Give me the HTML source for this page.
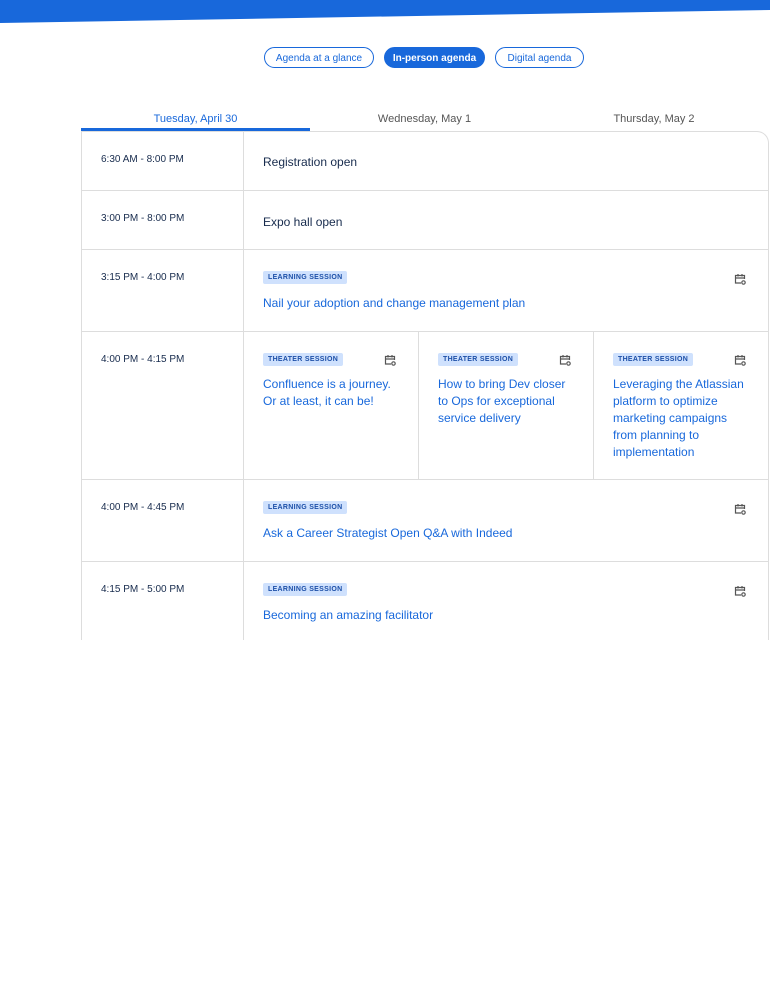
<!DOCTYPE html>
<html><head><meta charset="utf-8"><style>
*{box-sizing:border-box;margin:0;padding:0}
body{width:770px;height:999px;background:#fff;font-family:"Liberation Sans",sans-serif;position:relative;overflow:hidden}
.btn{position:absolute;top:47px;height:21px;border:1px solid #1868db;border-radius:11px;font-size:10px;color:#1868db;text-align:center;line-height:21px}
.tab{position:absolute;top:113px;font-size:11px;color:#555;text-align:center}
.card{position:absolute;left:81px;top:131px;width:688px;height:509px;border:1px solid #ddd;border-bottom:none;border-top-right-radius:12px;overflow:hidden}
.row{position:absolute;left:0;right:0;border-bottom:1px solid #ddd}
.time{position:absolute;left:19px;top:22px;font-size:10px;color:#172b4d}
.vl{position:absolute;top:0;bottom:0;width:1px;background:#ddd}
.plain{position:absolute;left:181px;font-size:12px;color:#172b4d}
.tag{position:absolute;background:#cfe1fd;color:#1c4fa8;font-size:7px;font-weight:bold;padding:3px 5px;border-radius:2px;letter-spacing:.3px}
.ttl{position:absolute;font-size:12px;color:#1868db;line-height:17px}
.ic{position:absolute;width:12px;height:12px}
</style></head><body>
<svg style="position:absolute;left:0;top:0" width="770" height="25"><polygon points="0,0 770,0 770,10 0,23" fill="#1868db"/></svg>
<div class="btn" style="left:264px;width:110px">Agenda at a glance</div>
<div class="btn" style="left:384px;width:101px;background:#1868db;color:#fff;font-weight:bold">In-person agenda</div>
<div class="btn" style="left:495px;width:89px">Digital agenda</div>
<div class="tab" style="left:81px;width:229px;color:#1868db">Tuesday, April 30</div>
<div class="tab" style="left:310px;width:229px">Wednesday, May 1</div>
<div class="tab" style="left:539px;width:230px">Thursday, May 2</div>
<div style="position:absolute;left:81px;top:128px;width:229px;height:3px;background:#1868db"></div>
<div class="card">
<div class="vl" style="left:161px"></div>
<div class="row" style="top:0;height:59px"><div class="time">6:30 AM - 8:00 PM</div><div class="plain" style="top:23px">Registration open</div></div>
<div class="row" style="top:59px;height:59px"><div class="time">3:00 PM - 8:00 PM</div><div class="plain" style="top:24px">Expo hall open</div></div>
<div class="row" style="top:118px;height:82px"><div class="time">3:15 PM - 4:00 PM</div><div class="tag" style="left:181px;top:21px">LEARNING SESSION</div><div class="ttl" style="left:181px;top:45px">Nail your adoption and change management plan</div>
<svg class="ic" style="left:652px;top:23px" viewBox="0 0 12 12" fill="none" stroke="#555" stroke-width="1.2"><path d="M7 10H1.5V2.5h9V6M1.5 5h9M4 1v2.5M8 1v2.5"/><circle cx="9.5" cy="9.5" r="1.7"/></svg></div>
<div class="row" style="top:200px;height:148px"><div class="time">4:00 PM - 4:15 PM</div>
<div class="vl" style="left:336px"></div><div class="vl" style="left:511px"></div>
<div class="tag" style="left:181px;top:21px">THEATER SESSION</div><div class="ttl" style="left:181px;top:44px">Confluence is a journey.<br>Or at least, it can be!</div>
<div class="tag" style="left:356px;top:21px">THEATER SESSION</div><div class="ttl" style="left:356px;top:44px">How to bring Dev closer<br>to Ops for exceptional<br>service delivery</div>
<div class="tag" style="left:531px;top:21px">THEATER SESSION</div><div class="ttl" style="left:531px;top:44px">Leveraging the Atlassian<br>platform to optimize<br>marketing campaigns<br>from planning to<br>implementation</div>
<svg class="ic" style="left:302px;top:22px" viewBox="0 0 12 12" fill="none" stroke="#555" stroke-width="1.2"><path d="M7 10H1.5V2.5h9V6M1.5 5h9M4 1v2.5M8 1v2.5"/><circle cx="9.5" cy="9.5" r="1.7"/></svg>
<svg class="ic" style="left:477px;top:22px" viewBox="0 0 12 12" fill="none" stroke="#555" stroke-width="1.2"><path d="M7 10H1.5V2.5h9V6M1.5 5h9M4 1v2.5M8 1v2.5"/><circle cx="9.5" cy="9.5" r="1.7"/></svg>
<svg class="ic" style="left:652px;top:22px" viewBox="0 0 12 12" fill="none" stroke="#555" stroke-width="1.2"><path d="M7 10H1.5V2.5h9V6M1.5 5h9M4 1v2.5M8 1v2.5"/><circle cx="9.5" cy="9.5" r="1.7"/></svg></div>
<div class="row" style="top:348px;height:82px"><div class="time">4:00 PM - 4:45 PM</div><div class="tag" style="left:181px;top:21px">LEARNING SESSION</div><div class="ttl" style="left:181px;top:45px">Ask a Career Strategist Open Q&amp;A with Indeed</div>
<svg class="ic" style="left:652px;top:23px" viewBox="0 0 12 12" fill="none" stroke="#555" stroke-width="1.2"><path d="M7 10H1.5V2.5h9V6M1.5 5h9M4 1v2.5M8 1v2.5"/><circle cx="9.5" cy="9.5" r="1.7"/></svg></div>
<div class="row" style="top:430px;height:90px;border-bottom:none"><div class="time">4:15 PM - 5:00 PM</div><div class="tag" style="left:181px;top:21px">LEARNING SESSION</div><div class="ttl" style="left:181px;top:45px">Becoming an amazing facilitator</div>
<svg class="ic" style="left:652px;top:23px" viewBox="0 0 12 12" fill="none" stroke="#555" stroke-width="1.2"><path d="M7 10H1.5V2.5h9V6M1.5 5h9M4 1v2.5M8 1v2.5"/><circle cx="9.5" cy="9.5" r="1.7"/></svg></div>
</div>
</body></html>
